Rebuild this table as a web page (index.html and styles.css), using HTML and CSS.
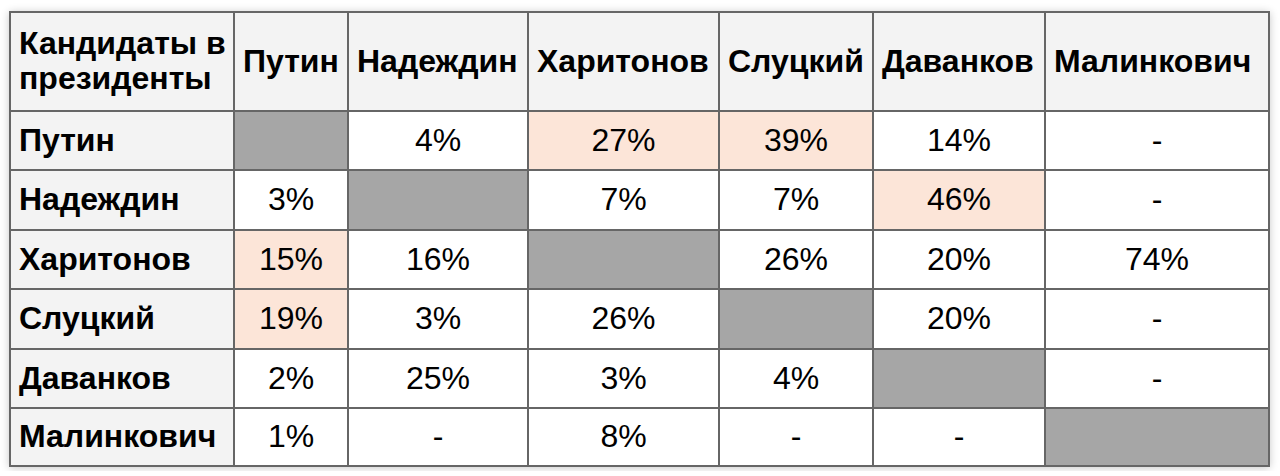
FILE: index.html
```html
<!DOCTYPE html>
<html lang="ru">
<head>
<meta charset="utf-8">
<link rel="stylesheet" href="styles.css">
</head>
<body>
<div class="frame">
<table class="matrix">
  <colgroup>
    <col class="c0"><col class="c1"><col class="c2"><col class="c3"><col class="c4"><col class="c5"><col class="c6">
  </colgroup>
  <thead>
    <tr class="head">
      <th class="corner">Кандидаты в<br>президенты</th>
      <th>Путин</th><th>Надеждин</th><th>Харитонов</th><th>Слуцкий</th><th>Даванков</th><th>Малинкович</th>
    </tr>
  </thead>
  <tbody>
    <tr><th>Путин</th><td class="self"></td><td>4%</td><td class="hi">27%</td><td class="hi">39%</td><td>14%</td><td>-</td></tr>
    <tr><th>Надеждин</th><td>3%</td><td class="self"></td><td>7%</td><td>7%</td><td class="hi">46%</td><td>-</td></tr>
    <tr><th>Харитонов</th><td class="hi">15%</td><td>16%</td><td class="self"></td><td>26%</td><td>20%</td><td>74%</td></tr>
    <tr><th>Слуцкий</th><td class="hi">19%</td><td>3%</td><td>26%</td><td class="self"></td><td>20%</td><td>-</td></tr>
    <tr class="short"><th>Даванков</th><td>2%</td><td>25%</td><td>3%</td><td>4%</td><td class="self"></td><td>-</td></tr>
    <tr class="last"><th>Малинкович</th><td>1%</td><td>-</td><td>8%</td><td>-</td><td>-</td><td class="self"></td></tr>
  </tbody>
</table>
</div>
</body>
</html>
```

FILE: styles.css
```css
html, body {
  margin: 0;
  padding: 0;
  background: #ffffff;
}
body {
  padding: 11px 0 0 9px;
  font-family: "Liberation Sans", Arial, sans-serif;
}
.frame {
  display: inline-block;
  box-shadow: 0 1px 8px rgba(0, 0, 0, 0.22);
  border-radius: 3px;
}
.matrix {
  border-collapse: collapse;
  table-layout: fixed;
  width: 1259px;
  font-size: 32px;
  color: #000;
}
.c0 { width: 224px; }
.c1 { width: 114px; }
.c2 { width: 180px; }
.c3 { width: 191px; }
.c4 { width: 154px; }
.c5 { width: 172px; }
.c6 { width: 224px; }
.matrix th,
.matrix td {
  border: 2px solid #666666;
  height: 57.5px;
  padding: 0 8px;
  vertical-align: middle;
  line-height: 35px;
}
.matrix th {
  background: #f3f3f3;
  font-weight: bold;
  text-align: left;
  white-space: nowrap;
}
.matrix .head th {
  height: 96.5px;
}
.matrix td {
  background: #ffffff;
  text-align: center;
}
.matrix td.self {
  background: #a6a6a6;
}
.matrix td.hi {
  background: #fce5d8;
}
.matrix .short th,
.matrix .short td {
  height: 57px;
}
.matrix .last th,
.matrix .last td {
  height: 56px;
}
```
